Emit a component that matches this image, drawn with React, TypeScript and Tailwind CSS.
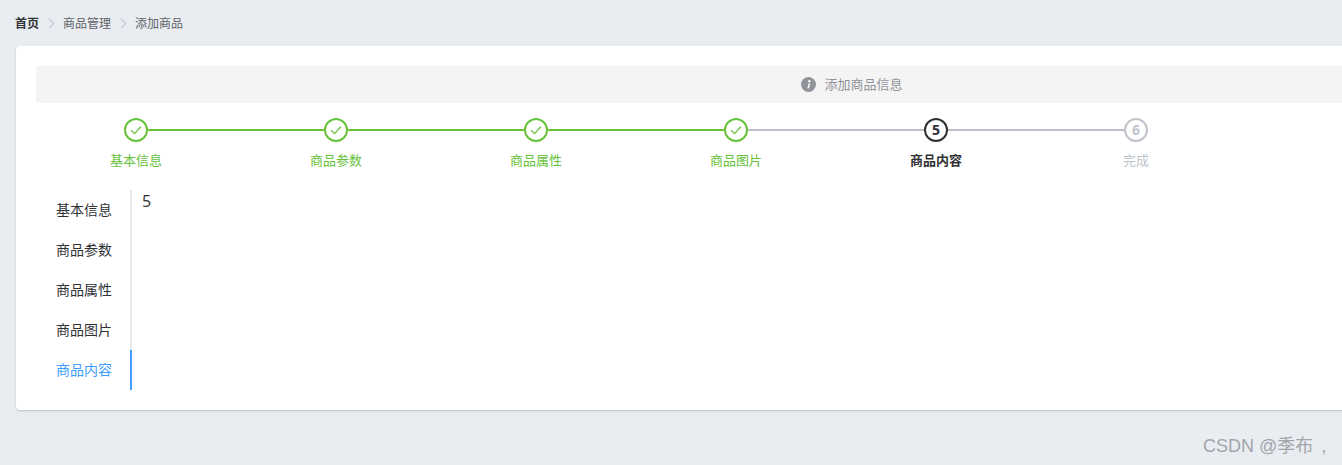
import React from 'react';

const steps = ['基本信息', '商品参数', '商品属性', '商品图片', '商品内容', '完成'];
const tabs = ['基本信息', '商品参数', '商品属性', '商品图片', '商品内容'];
const activeStep = 4;

function Separator() {
  return (
    <svg width="7" height="11" viewBox="0 0 7 11" fill="none" className="ml-[9px] mr-[8px]">
      <path d="M1 0.8 L5.8 5.5 L1 10.2" stroke="#c0c4cc" strokeWidth="1.1" />
    </svg>
  );
}

// One step of the progress bar: line, circle, line, then the title
function StepItem({ title, index }: { title: string; index: number }) {
  const done = index < activeStep;
  const active = index === activeStep;
  const circleColor = done ? 'border-[#67c23a] text-[#67c23a]' : active ? 'border-[#303133] text-[#303133]' : 'border-[#c0c4cc] text-[#c0c4cc]';
  const titleColor = done ? 'text-[#67c23a]' : active ? 'text-[#303133] font-bold' : 'text-[#c0c4cc]';

  return (
    <div className="flex w-[200px] flex-col items-center">
      <div className="flex w-full items-center">
        <div className={`h-[2px] flex-1 ${index === 0 ? '' : done ? 'bg-[#67c23a]' : 'bg-[#bcbec9]'}`} />
        <div className={`flex h-6 w-6 items-center justify-center rounded-full border-2 bg-white text-sm font-bold ${circleColor}`}>
          {done ? (
            <svg width="12" height="12" viewBox="0 0 12 12" fill="none">
              <path d="M1.2 6.3 L4.6 9.6 L10.8 2.8" stroke="#67c23a" strokeWidth="1.3" />
            </svg>
          ) : (
            index + 1
          )}
        </div>
        <div className={`h-[2px] flex-1 ${index === steps.length - 1 ? '' : index < activeStep - 1 ? 'bg-[#67c23a]' : 'bg-[#bcbec9]'}`} />
      </div>
      <div className={`mt-[7px] text-[13px] leading-[22px] ${titleColor}`}>{title}</div>
    </div>
  );
}

export default function App() {
  return (
    <div
      className="relative h-[465px] w-[1342px] overflow-hidden bg-[#e9edf2] pl-[15px] pt-4"
      style={{ fontFamily: '"Open Sans", "Noto Sans CJK SC", sans-serif' }}
    >
      {/* Breadcrumb */}
      <div className="flex h-[15px] items-center text-xs text-[#606266]">
        <span className="font-bold text-[#303133]">首页</span>
        <Separator />
        <span>商品管理</span>
        <Separator />
        <span>添加商品</span>
      </div>

      {/* Card */}
      <div className="ml-px mt-[15px] h-[364px] w-[1672px] rounded bg-white p-5 shadow-[0_1px_2px_rgba(0,0,0,0.2)]">
        <div className="flex h-[37px] items-center justify-center rounded bg-[#f4f4f5] pt-px text-[13px] text-[#909399]">
          <svg width="15" height="15" viewBox="0 0 14 14" className="mb-px mr-2">
            <circle cx="7" cy="7" r="7" fill="#909399" />
            <circle cx="7.7" cy="3.9" r="1.1" fill="#fff" />
            <path d="M7.2 6 L5.9 10.6 H7.4 L8.7 6 Z" fill="#fff" />
          </svg>
          <span>添加商品信息</span>
        </div>

        {/* Steps */}
        <div className="mt-[15px] flex">
          {steps.map((title, index) => (
            <StepItem key={title} title={title} index={index} />
          ))}
        </div>

        {/* Vertical tabs */}
        <div className="mt-[19px] flex h-[200px]">
          <div className="flex w-[96px] flex-col border-r-2 border-[#e4e7ed]">
            {tabs.map((tab, index) => (
              <div
                key={tab}
                className={`-mr-[2px] flex h-10 items-center justify-end border-r-2 pr-[18px] text-sm ${
                  index === activeStep ? 'border-[#409eff] text-[#409eff]' : 'border-transparent text-[#303133]'
                }`}
              >
                {tab}
              </div>
            ))}
          </div>
          <div className="pl-[10px] text-base leading-[22px] text-[#303133]">5</div>
        </div>
      </div>

      {/* Watermark */}
      <div
        className="absolute left-[1203px] top-[434px] whitespace-pre text-lg leading-6 text-[#a3a5aa]"
        style={{ fontFamily: '"Liberation Sans", "Noto Sans CJK SC", sans-serif' }}
      >
        CSDN @季布 <span className="ml-[3px]">,</span>
      </div>
    </div>
  );
}
